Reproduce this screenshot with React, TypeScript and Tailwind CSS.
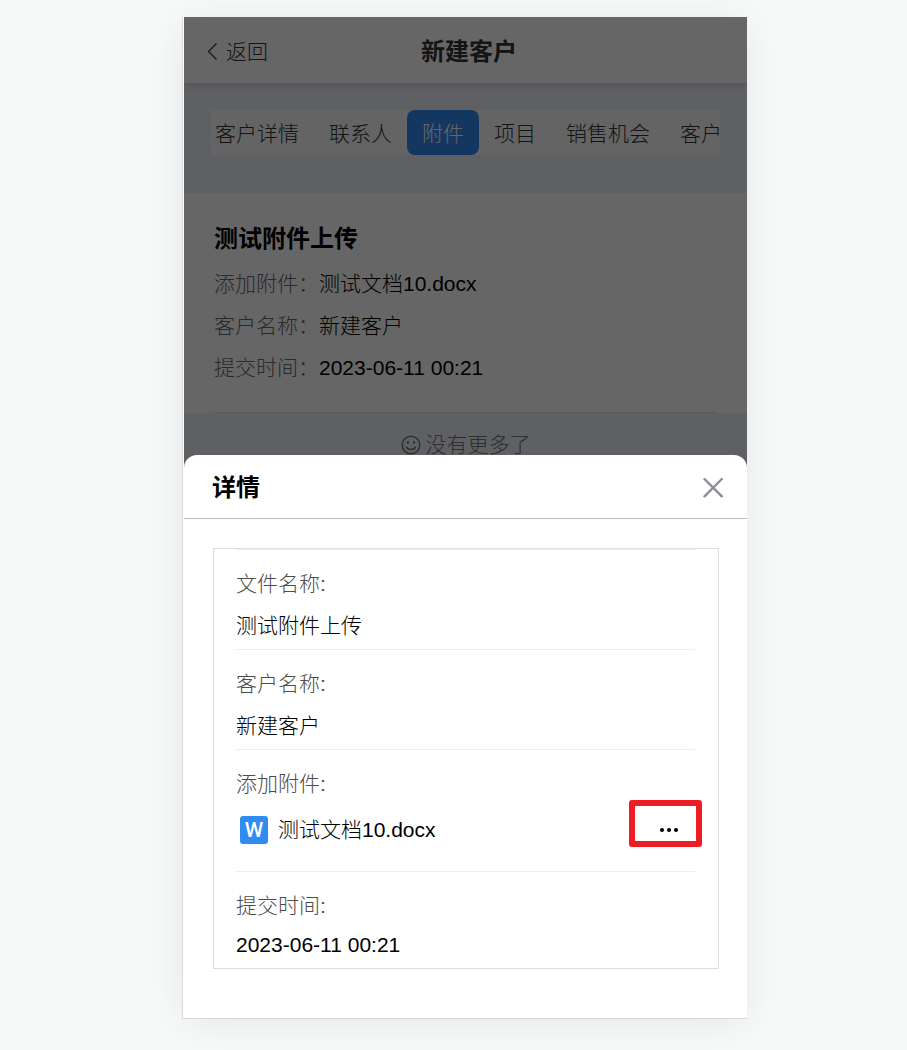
import type { ReactNode } from "react";

const tabs = ["客户详情", "联系人", "附件", "项目", "销售机会", "客户"];
const activeTab = "附件";

const summary = [
  { label: "添加附件", value: "测试文档10.docx" },
  { label: "客户名称", value: "新建客户" },
  { label: "提交时间", value: "2023-06-11 00:21" },
];

function Field({ label, children }: { label: string; children: ReactNode }) {
  return (
    <div className="border-t border-[#eeeeee] pt-[13px] pb-[2px] last:pb-0">
      <dt className="leading-[42px] text-[#4c4c4c]">{label}:</dt>
      <dd className="leading-[42px]">{children}</dd>
    </div>
  );
}

function TopBar() {
  return (
    <header className="relative grid h-[66px] grid-cols-[1fr_auto_1fr] items-center bg-white px-[22px] pt-1 shadow-[0_2px_8px_rgba(0,0,0,0.16)]">
      <button type="button" className="flex items-center gap-2 justify-self-start text-[#333333]">
        <svg className="h-[18px] w-3" viewBox="0 0 12 18" fill="none" stroke="currentColor" strokeWidth="1.2">
          <path d="M10.5 0.5 2.5 8.500l8 8" />
        </svg>
        返回
      </button>
      <h1 className="pl-[7px] text-[24px] font-bold text-[#333333]">新建客户</h1>
    </header>
  );
}

function Tabs() {
  return (
    <nav className="bg-[#eef1f8] px-[27px] pt-[27px] pb-[38px]">
      <div className="flex h-[45px] overflow-hidden bg-[#f9f9f9]">
        {tabs.map((tab) => (
          <button
            key={tab}
            type="button"
            className={
              tab === activeTab
                ? "shrink-0 rounded-lg bg-[#328af3] px-[15px] pt-[2px] text-white"
                : "shrink-0 px-[15px] pt-[2px] text-[#333333] first:pl-1"
            }
          >
            {tab}
          </button>
        ))}
      </div>
    </nav>
  );
}

function Summary() {
  return (
    <section className="bg-white px-[30px] pt-6">
      <div className="border-b border-[#dfe4e2] pb-[23px]">
        <h2 className="pb-[2px] text-[24px] leading-[44px] font-bold">测试附件上传</h2>
        <dl>
          {summary.map((item) => (
            <div key={item.label} className="flex leading-[42px]">
              <dt className="text-[#666a70]">{item.label}：</dt>
              <dd>{item.value}</dd>
            </div>
          ))}
        </dl>
      </div>
    </section>
  );
}

function DetailSheet() {
  return (
    <section className="relative -mt-4 rounded-t-[13px] bg-white pb-[49px]" role="dialog" aria-labelledby="sheet-title">
      <div className="flex h-16 items-center justify-between border-b border-[#bfbfbf] pt-[2px] pr-6 pl-7">
        <h2 id="sheet-title" className="text-[24px] font-bold">
          详情
        </h2>
        <button type="button" aria-label="关闭" className="text-[#8b8e94]">
          <svg className="size-5" viewBox="0 0 20 20" fill="none" stroke="currentColor" strokeWidth="2.4" strokeLinecap="round">
            <path d="M1.5 1 18.8 18.300M18.800 1 1.500 18.300" />
          </svg>
        </button>
      </div>

      <dl className="mt-[29px] mr-7 ml-[29px] border border-[#dddddd] pr-[23px] pl-[22px]">
        <Field label="文件名称">测试附件上传</Field>
        <Field label="客户名称">新建客户</Field>
        <Field label="添加附件">
          <div className="mb-[14px] flex h-[50px] items-center">
            <span
              aria-hidden="true"
              className="ml-1 flex size-7 items-center justify-center rounded-[3px] bg-[#308cf0] font-['Roboto','Liberation_Sans',sans-serif] text-[21px] leading-7 font-medium text-white"
            >
              W
            </span>
            <a href="#file" className="ml-[10px] leading-[50px]">
              测试文档10.docx
            </a>
            <button type="button" aria-label="更多" className="relative mr-3 ml-auto flex h-7 w-7 items-center justify-center">
              <svg className="h-1 w-5" viewBox="0 0 20 4" fill="currentColor">
                <circle cx="3" cy="2" r="2" />
                <circle cx="10" cy="2" r="2" />
                <circle cx="17" cy="2" r="2" />
              </svg>
              <span className="absolute -top-4 -right-[19px] h-[47px] w-[73px] rounded-[3px] border-[6px] border-[#ee1c25]" />
            </button>
          </div>
        </Field>
        <Field label="提交时间">
          <time dateTime="2023-06-11T00:21" className="block pb-[6px] leading-[35px]">
            2023-06-11 00:21
          </time>
        </Field>
      </dl>
    </section>
  );
}

export default function App() {
  return (
    <div className="flex min-h-screen justify-center bg-[#f8faf9] pt-[17px] pb-8 pl-[22px] font-['Liberation_Sans','Noto_Sans_CJK_SC',sans-serif] text-[21px] font-light text-black">
      <main className="w-full max-w-[565px] self-start border-b border-l border-[#d8d8d8] bg-white pl-px shadow-[0_4px_40px_rgba(0,0,0,0.08)]">
        <div className="relative overflow-hidden">
          <TopBar />
          <Tabs />
          <Summary />
          <p className="flex items-center justify-center gap-[5px] bg-[#eef1f8] pt-4 pb-[10px] leading-8 text-[#70757a]">
            <svg className="size-5" viewBox="0 0 20 20" fill="none" stroke="currentColor" strokeWidth="1.5" strokeLinecap="round">
              <circle cx="10" cy="10" r="8.8" />
              <path d="M5.500 12.200c1.600 3 7.400 3 9 0" />
              <path d="M7 7v1M13 7v1" strokeWidth="2" />
            </svg>
            没有更多了
          </p>
          <div className="absolute inset-0 bg-black/60" />
        </div>
        <DetailSheet />
      </main>
    </div>
  );
}
